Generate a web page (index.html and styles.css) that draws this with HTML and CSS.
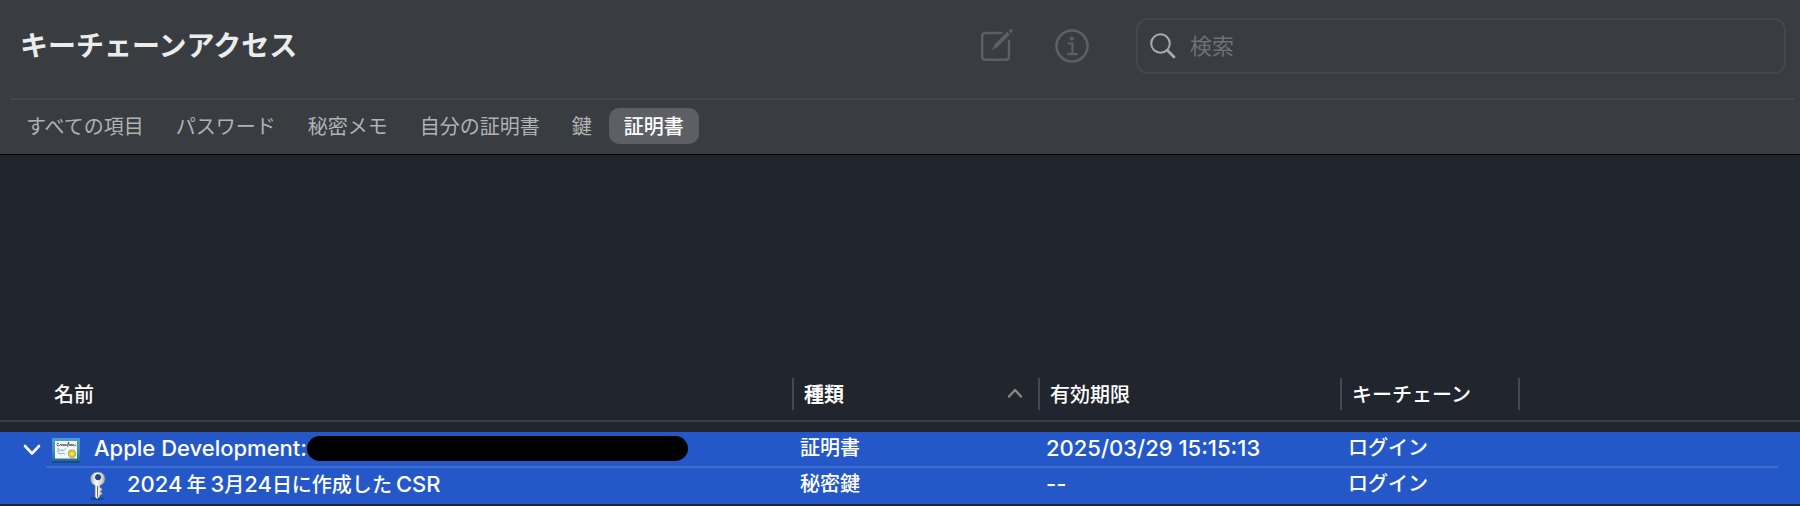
FILE: index.html
```html
<!DOCTYPE html>
<html lang="ja">
<head>
<meta charset="utf-8">
<meta name="viewport" content="width=device-width, initial-scale=1">
<title>キーチェーンアクセス</title>
<link rel="stylesheet" href="styles.css">
</head>
<body>
<header class="header">
  <div class="toolbar">
    <h1 class="title">キーチェーンアクセス</h1>
    <div class="actions">
      <button class="icon-button" type="button" aria-label="新規項目">
        <svg width="34" height="34" viewBox="0 0 34 34" fill="none" stroke="currentColor" stroke-width="2.400">
          <path d="M21.500 4H4.500Q1.200 4 1.200 7.300V27.500Q1.200 30.800 4.500 30.800H24.700Q28 30.800 28 27.500V11"/>
          <path d="M11 21l2.500-5.500L26.200 2.800l2.800 2.800L16.300 18.300z" fill="currentColor" stroke="none"/>
          <path d="M27.500 1.700l1.300-1.300q1-.6 2.200.4t.3 2.200l-1.300 1.300z" fill="currentColor" stroke="none"/>
        </svg>
      </button>
      <button class="icon-button" type="button" aria-label="情報">
        <svg width="34" height="34" viewBox="0 0 34 34" fill="none" stroke="currentColor" stroke-width="2.200">
          <circle cx="17" cy="17" r="15.500" stroke-width="2.600"/>
          <circle cx="16.800" cy="9.600" r="2.100" fill="currentColor" stroke="none"/>
          <path d="M13.500 14.500H17.500V25M13 25.200H22" stroke-linecap="round" stroke-linejoin="round"/>
        </svg>
      </button>
    </div>
    <label class="search">
      <svg class="search-icon" width="26" height="26" viewBox="0 0 26 26" fill="none" stroke="currentColor" stroke-linecap="round">
        <circle cx="10.500" cy="10.500" r="9.300" stroke-width="2"/>
        <path d="M17.300 17.300L24 24" stroke-width="2.800"/>
      </svg>
      <input class="search-input" type="text" placeholder="検索" aria-label="検索">
    </label>
  </div>
  <nav class="tabs">
    <button class="tab" type="button">すべての項目</button>
    <button class="tab" type="button">パスワード</button>
    <button class="tab" type="button">秘密メモ</button>
    <button class="tab" type="button">自分の証明書</button>
    <button class="tab" type="button">鍵</button>
    <button class="tab tab-active" type="button" aria-current="page">証明書</button>
  </nav>
</header>
<main class="content">
  <table class="items">
    <colgroup>
      <col class="col-name"><col class="col-kind"><col class="col-expiry"><col class="col-keychain"><col>
    </colgroup>
    <thead>
      <tr>
        <th scope="col"><div class="heading heading-name">名前</div></th>
        <th scope="col" aria-sort="ascending">
          <div class="heading heading-sorted">種類
            <svg width="16" height="10" viewBox="0 0 16 10" fill="none" stroke="currentColor" stroke-width="2.400" stroke-linecap="round" stroke-linejoin="round"><path d="M2 8.500L8 2l6 6.500"/></svg>
          </div>
        </th>
        <th scope="col"><div class="heading">有効期限</div></th>
        <th scope="col"><div class="heading">キーチェーン</div></th>
        <td><div class="heading"></div></td>
      </tr>
    </thead>
    <tbody>
      <tr>
        <td>
          <div class="name">
            <button class="disclosure" type="button" aria-label="閉じる" aria-expanded="true">
              <svg width="18" height="12" viewBox="0 0 18 12" fill="none" stroke="currentColor" stroke-width="2.600" stroke-linecap="round" stroke-linejoin="round"><path d="M2 2l7 7.500L16 2"/></svg>
            </button>
            <svg class="certificate" width="28" height="26" viewBox="0 0 28 26">
              <defs>
                <linearGradient id="frame" x1="0" y1="0" x2="0" y2="1"><stop offset="0" stop-color="#4b9dca"/><stop offset=".5" stop-color="#3f93bd"/><stop offset="1" stop-color="#246a94"/></linearGradient>
                <radialGradient id="seal"><stop offset="0" stop-color="#f1eb8b"/><stop offset=".7" stop-color="#d2c549"/><stop offset="1" stop-color="#a79828"/></radialGradient>
              </defs>
              <rect y="1" width="28" height="24" fill="#174a92"/>
              <rect width="28" height="23" fill="url(#frame)"/>
              <rect x="3" y="3" width="22" height="17.500" fill="#f4f7f5"/>
              <path d="M7 5.500q-2-1-2 1t2.500 1.200L9 6l.5 2 1.500-2 .8 2L13 6l1 2 3-4-1.500 5M17 6l1 2 1-2 1 2 1.200-2 1 2 2-1" fill="none" stroke="#4f5652" stroke-width=".9"/>
              <path d="M5 11q3-1 2 1.500T5 13M8 12l1 1 1-1.500 1 1.500 3-2.500M6 15.500l2-.5 1 1 2-.8 2 .8" fill="none" stroke="#76a7d2" stroke-width=".9"/>
              <circle cx="20" cy="15.800" r="4.200" fill="url(#seal)"/>
            </svg>
            <span class="latin">Apple Development:</span>
            <span class="redaction"></span>
          </div>
        </td>
        <td>証明書</td>
        <td><span class="latin">2025/03/29 15:15:13</span></td>
        <td>ログイン</td>
        <td></td>
      </tr>
      <tr>
        <td>
          <div class="name name-child">
            <svg class="key" width="18" height="30" viewBox="0 0 18 30">
              <defs><linearGradient id="metal" x1="0" y1="0" x2="1" y2="0"><stop offset="0" stop-color="#b0b2b2"/><stop offset=".4" stop-color="#fafafa"/><stop offset="1" stop-color="#b4b8ba"/></linearGradient></defs>
              <ellipse cx="8" cy="27.500" rx="7" ry="1.800" fill="#18439f"/>
              <path d="M9 1C4.500 1 1.500 4 1.500 8c0 3 1.600 5.300 4.500 6.500V26l2 2 3-2.500V24l2-.5v-2l-2-1 2-1v-2l-2-1v-2c3-1 5-3.500 5-6.500C16 4 13.500 1 9 1z" fill="url(#metal)" stroke="#6d7478" stroke-width=".7"/>
              <path d="M8.500 15v11" stroke="#666b6f"/>
              <circle cx="9" cy="6.200" r="2.600" fill="#1747a0" stroke="#24324d" stroke-width=".8"/>
            </svg>
            <span><span class="latin">2024</span><span class="spaced">年</span><span class="latin">3</span>月<span class="latin">24</span>日に作成し<span class="spaced-end">た</span><span class="latin">CSR</span></span>
          </div>
        </td>
        <td>秘密鍵</td>
        <td><span class="latin">--</span></td>
        <td>ログイン</td>
        <td></td>
      </tr>
    </tbody>
  </table>
</main>
</body>
</html>
```
FILE: styles.css
```css
* {
  box-sizing: border-box;
}

body {
  display: flex;
  flex-direction: column;
  min-height: 100vh;
  margin: 0;
  background: #21252d;
  color: #fff;
  font-family: Inter, "Noto Sans CJK JP", sans-serif;
  font-size: 20px;
  font-weight: 500;
}

button,
input {
  border: 0;
  padding: 0;
  background: none;
  color: inherit;
  font: inherit;
}

svg {
  display: block;
  flex: none;
}

.header {
  border-bottom: 1px solid #000;
  background: #393c40;
}

.toolbar {
  display: flex;
  align-items: center;
  height: 100px;
  margin: 0 6px 0 10px;
  border-bottom: 2px solid #45474c;
  padding: 0 8px 6px 10px;
}

.title {
  flex: 1;
  margin: 0;
  color: #ececec;
  font-size: 28px;
  font-weight: 700;
  line-height: 40px;
  white-space: nowrap;
}

.actions {
  display: flex;
  gap: 40px;
  margin-right: 47px;
  color: #5d5f63;
}

.search {
  display: flex;
  flex: 0 1 650px;
  align-items: center;
  gap: 14px;
  height: 56px;
  border: 2px solid #45474b;
  border-radius: 12px;
  padding-left: 12px;
}

.search-icon {
  color: #a9aaac;
}

.search-input {
  flex: 1;
  min-width: 0;
  font-size: 22px;
  font-weight: 400;
  outline: 0;
}

.search-input::placeholder {
  color: #6e7073;
  opacity: 1;
}

.tabs {
  display: flex;
  gap: 2px;
  padding: 8px 11px 10px;
}

.tab {
  height: 36px;
  border-radius: 10px;
  padding: 0 15px 2px;
  color: #b0b2b5;
  font-weight: 400;
  white-space: nowrap;
}

.tab-active {
  background: #5d5f64;
  color: #fff;
  font-weight: 500;
}

.content {
  display: flex;
  flex: 1;
  flex-direction: column;
  justify-content: flex-end;
  padding-bottom: 2px;
}

.items {
  width: 100%;
  border-spacing: 0;
  table-layout: fixed;
}

.col-name {
  width: 792px;
}

.col-kind {
  width: 246px;
}

.col-expiry {
  width: 302px;
}

.col-keychain {
  width: 178px;
}

.items thead th,
.items thead td {
  border-bottom: 2px solid #3b3e45;
  padding: 0 0 10px;
  font-weight: 500;
  text-align: left;
}

.heading {
  display: flex;
  align-items: center;
  justify-content: space-between;
  height: 32px;
  border-left: 2px solid #46494f;
  padding: 0 0 2px 10px;
  white-space: nowrap;
}

.heading-name {
  border-left: 0;
  padding-left: 54px;
}

.heading-sorted {
  padding-right: 15px;
  font-weight: 700;
}

.heading-sorted svg {
  color: #85878c;
}

.items tbody::before {
  display: block;
  height: 10px;
  content: "";
}

.items tbody tr {
  background: #2458c9;
}

.items tbody td {
  height: 36px;
  padding: 0 0 4px 8px;
  line-height: 30px;
  white-space: nowrap;
}

.items tbody td:first-child {
  padding-left: 0;
}

.items tbody tr:first-child {
  background: linear-gradient(#3f6cce, #3f6cce) 46px 100% / calc(100% - 68px) 2px no-repeat #2458c9;
}

.latin {
  font-size: 22px;
}

.spaced {
  margin: 0 4px;
}

.spaced-end {
  margin-right: 4px;
}

.name {
  display: flex;
  align-items: center;
  height: 30px;
  padding-left: 23px;
}

.name-child {
  padding-left: 89px;
}

.disclosure {
  margin-top: 4px;
}

.certificate {
  margin: 6px 14px 0 11px;
}

.key {
  margin: 4px 20px 0 0;
}

.redaction {
  width: 381px;
  height: 25px;
  border-radius: 13px;
  background: #000;
}
```
